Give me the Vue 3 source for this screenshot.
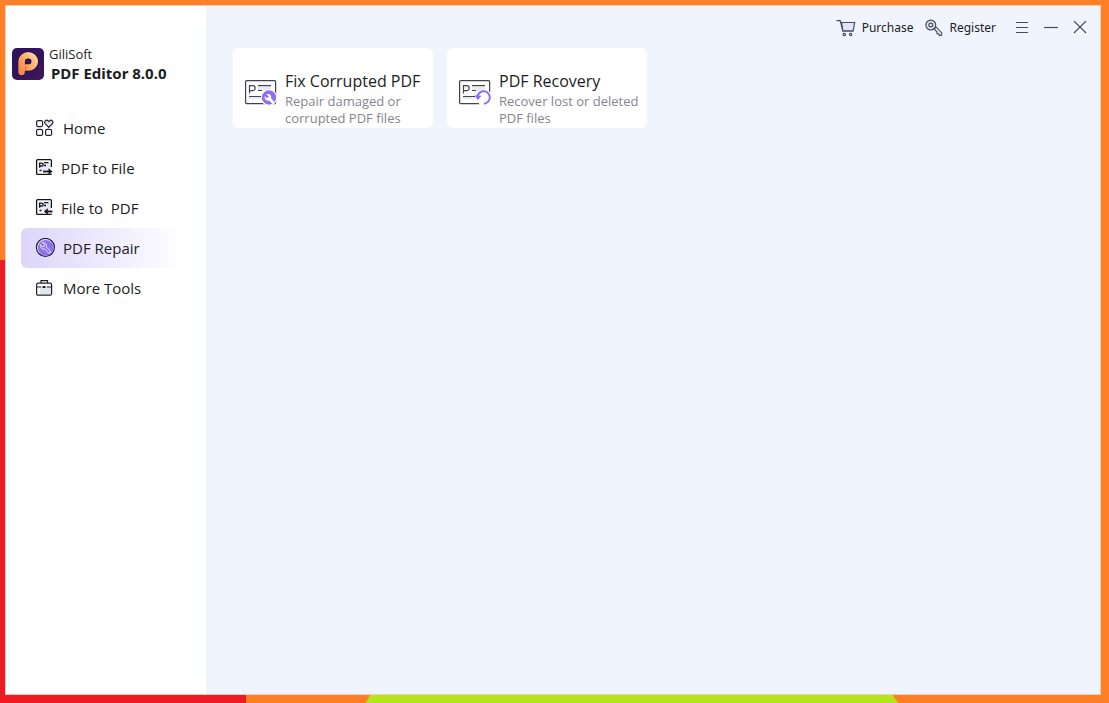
<script setup>
import { ref } from 'vue'

const active = ref('repair')
const items = [
  { id: 'home', label: 'Home' },
  { id: 'toFile', label: 'PDF to File', near: true },
  { id: 'toPdf', label: 'File to  PDF', near: true },
  { id: 'repair', label: 'PDF Repair' },
  { id: 'tools', label: 'More Tools' }
]
const cards = [
  { id: 'fix', title: 'Fix Corrupted PDF', text: 'Repair damaged or corrupted PDF files' },
  { id: 'recovery', title: 'PDF Recovery', text: 'Recover lost or deleted PDF files' }
]
</script>

<template>
  <div class="desktop">
    <div class="window">
      <aside class="sidebar">
        <div class="brand">
          <svg class="logo" viewBox="0 0 32 32" aria-hidden="true">
            <defs>
              <linearGradient id="logoBack" x1="0" y1="0" x2="1" y2="1">
                <stop offset="0" stop-color="#2a1462" />
                <stop offset="1" stop-color="#3f1457" />
              </linearGradient>
              <linearGradient id="logoFront" x1="1" y1="0" x2="0" y2="1">
                <stop offset="0" stop-color="#ffd49a" />
                <stop offset="0.6" stop-color="#fba45f" />
                <stop offset="1" stop-color="#f58a4d" />
              </linearGradient>
            </defs>
            <rect width="32" height="32" rx="5" fill="url(#logoBack)" />
            <path d="M9.6 24V13.4a6.6 6.1 0 1 1 6.6 6.1h-2.2" fill="none" stroke="#1b0b42" stroke-width="8" stroke-linecap="round" />
            <path d="M9.6 24V13.4a6.6 6.1 0 1 1 6.6 6.1h-2.2" fill="none" stroke="url(#logoFront)" stroke-width="6.6" stroke-linecap="round" />
            <path d="M13 22.4c1-1.4.8-2.8.7-4.2" fill="none" stroke="#d96a3f" stroke-width="1" />
          </svg>
          <div class="brand-text">
            <span class="company">GiliSoft</span>
            <strong class="product">PDF Editor 8.0.0</strong>
          </div>
        </div>
        <nav class="nav">
          <button
            v-for="item in items"
            :key="item.id"
            type="button"
            class="nav-item"
            :class="{ active: active === item.id, near: item.near }"
            @click="active = item.id"
          >
            <svg v-if="item.id === 'home'" class="nav-icon" viewBox="0 0 20 20" fill="none" stroke="#20212b" stroke-width="1.2">
              <rect x="1.6" y="2.6" width="6" height="6" rx="1.5" />
              <rect x="1.6" y="11.4" width="6" height="6" rx="1.5" />
              <rect x="10.6" y="11.4" width="6" height="6" rx="1.5" />
              <path d="M13.8 9.3L10.3 5.8a2 2 0 0 1 2.800-2.900l.7.7.7-.7a2 2 0 0 1 2.800 2.900z" fill="#e1e5ef" stroke-linejoin="round" />
            </svg>
            <svg v-else-if="item.id === 'toFile'" class="nav-icon" viewBox="0 0 20 20" fill="none" stroke="#15161c" stroke-width="1.3">
              <path d="M4 5h12v8H5z" fill="#e6e9f3" stroke="none" />
              <path d="M16.4 9V2.600a1 1 0 0 0-1-1H2.600a1 1 0 0 0-1 1v12.800a1 1 0 0 0 1 1h12.800a1 1 0 0 0 1-1" />
              <path d="M4.600 9.800V5.100h2.200a1.400 1.400 0 0 1 0 2.900H4.600M9 4.600h4.500M9 7.500h2M4.500 12.500h2" />
              <path d="M8 13.500h7" stroke-width="1.800" />
              <path d="M13.500 10.300l4 3.200-4 3.200z" fill="#15161c" stroke="none" />
            </svg>
            <svg v-else-if="item.id === 'toPdf'" class="nav-icon" viewBox="0 0 20 20" fill="none" stroke="#15161c" stroke-width="1.3">
              <path d="M4 5h12v8H5z" fill="#e6e9f3" stroke="none" />
              <path d="M16.4 10V2.600a1 1 0 0 0-1-1H2.600a1 1 0 0 0-1 1v12.800a1 1 0 0 0 1 1h12.800a1 1 0 0 0 1-1" />
              <path d="M4.600 9.800V5.100h2.200a1.400 1.400 0 0 1 0 2.900H4.600M9 4.600h4.500M9 7.500h2M4.500 12.500h2" />
              <path d="M11 13.500h6.500" stroke-width="1.800" />
              <path d="M12.800 10.300l-4 3.200 4 3.200z" fill="#15161c" stroke="none" />
            </svg>
            <svg v-else-if="item.id === 'repair'" class="nav-icon" viewBox="0 0 20 20">
              <circle cx="10.4" cy="9.4" r="9" fill="#f3efff" stroke="#211c40" stroke-width="1.2" />
              <circle cx="10.7" cy="9.8" r="7.8" fill="#8e6fee" />
              <path d="M7.300 4.700l2.200 2-.3 1.700-1.700.4-2-2.200c-.7 3 1.400 5 4.100 4.300l3.600 3.800c1.500 1.200 3-.4 2-1.900l-3.800-3.600c.8-2.700-1.200-5-4.100-4.500z" fill="#8e6fee" stroke="#efe9ff" stroke-width="1" />
            </svg>
            <svg v-else class="nav-icon" viewBox="0 0 20 20" fill="none" stroke="#20212b" stroke-width="1.2">
              <path d="M5 9h11v7H5z" fill="#e1e5ef" stroke="none" />
              <rect x="1.6" y="5.2" width="15" height="12" rx="1.5" />
              <path d="M6 5V2.700h6.500V5M1.700 9h4.500M12 9h4.400" />
              <path d="M7.5 9h3" stroke-width="2" />
            </svg>
            <span class="nav-label">{{ item.label }}</span>
          </button>
        </nav>
      </aside>

      <main class="main">
        <header class="titlebar">
          <button type="button" class="link">
            <svg class="cart" viewBox="0 0 20 18" fill="none" stroke="#4a4b5c" stroke-width="1.2" aria-hidden="true">
              <path d="M5.6 3.5h13l-1.400 8.500H6.800z" fill="#dfe5f2" />
              <path d="M.5 1.600h3.700l2.600 10.400h10.400" />
              <circle cx="8.3" cy="15.500" r="1.2" /><circle cx="14.6" cy="15.500" r="1.2" />
            </svg>
            Purchase
          </button>
          <button type="button" class="link register">
            <svg class="key" viewBox="0 0 18 18" fill="none" stroke="#4a4b5c" stroke-width="1.2" aria-hidden="true">
              <circle cx="5.8" cy="6" r="4.9" fill="#dfe5f2" />
              <circle cx="5.8" cy="6" r="1.9" />
              <path d="M9 9.800l2.200-1.600 5.500 5.700-.2 2.300-2.200.3-.5-1.700-1.700-.2-.2-1.800z" fill="#eef1fb" />
            </svg>
            Register
          </button>
          <button type="button" class="control menu" aria-label="Menu">
            <svg viewBox="0 0 14 14" stroke="#4a4b5c" stroke-width="1.2"><path d="M1 1.500h12M1 6.500h12M1 11.500h12" /></svg>
          </button>
          <button type="button" class="control" aria-label="Minimize">
            <svg viewBox="0 0 14 14" stroke="#4a4b5c" stroke-width="1.2"><path d="M0 6.500h14" /></svg>
          </button>
          <button type="button" class="control" aria-label="Close">
            <svg viewBox="0 0 14 14" stroke="#4a4b5c" stroke-width="1.2"><path d="M1 0l12 12M13 0L1 12" /></svg>
          </button>
        </header>

        <section class="cards">
          <button v-for="card in cards" :key="card.id" type="button" class="card">
            <svg class="card-icon" viewBox="0 0 32 28" fill="none" stroke="#42434f" stroke-width="1.2" aria-hidden="true">
              <path d="M13 9h13v4H13zM4 19h12v2H4z" fill="#e8eaf6" stroke="none" />
              <rect x=".6" y="2.6" width="30" height="23" rx="1" />
              <path d="M4.500 15.500V7.600h3.200a2.500 2.500 0 0 1 0 5H4.500M13 7.600h13M13 12.500h4M4 18.500h12" />
              <template v-if="card.id === 'fix'">
                <circle cx="24" cy="19.5" r="8.3" fill="#fff" stroke="none" />
                <circle cx="24" cy="19.5" r="7.2" fill="#8f70ee" stroke="none" />
                <path d="M21.500 16.200l2.200 2.100-.5 1.300-1.500.4-2-1.900c-.6 3.400 1.700 5.300 4.500 4.400l3.300 3.500 2-2-3.400-3.500c.8-2.700-1.500-5.100-4.600-4.300z" fill="#fff" stroke="none" />
              </template>
              <template v-else>
                <path d="M15 14.500l9-3 8.500 3V28H21z" fill="#fff" stroke="none" />
                <path d="M18.500 18.500a6.200 6.200 0 1 1 6.300 7.200" stroke="#8f70ee" stroke-width="2" />
                <path d="M15.500 17.200l7 .5-3.700 4.500z" fill="#8f70ee" stroke="none" />
              </template>
            </svg>
            <span class="card-text">
              <span class="card-title">{{ card.title }}</span>
              <span class="card-desc">{{ card.text }}</span>
            </span>
          </button>
        </section>
      </main>
    </div>
    <div class="floor" aria-hidden="true"><div class="grass"></div></div>
  </div>
</template>

<style>
body {
  margin: 0;
}
</style>

<style scoped>
.desktop {
  min-height: 100vh;
  box-sizing: border-box;
  display: flex;
  flex-direction: column;
  padding: 5px 0 0 5px;
  background: linear-gradient(#ff7f27 0 37%, #ed1c24 37%) left / 5px 100% no-repeat, #ff7f27;
  font-family: "Open Sans", "Noto Sans", sans-serif;
  color: #1c1d22;
}
.window {
  flex: 1;
  display: flex;
  margin-right: 8px;
  box-sizing: border-box;
  border: 1px solid #f3cdb8;
  background: #f0f4fd;
}
.floor {
  height: 8px;
  margin-left: -5px;
  background: linear-gradient(90deg, #ed1c24 22.2%, #ff7f27 22.2%);
}
.grass {
  height: 100%;
  width: 48%;
  margin-left: 33%;
  background: #b5e61d;
  clip-path: polygon(4px 0, calc(100% - 6px) 0, 100% 100%, 0 100%);
}
button {
  border: 0;
  padding: 0;
  margin: 0;
  background: none;
  font: inherit;
  color: inherit;
  text-align: left;
}
.sidebar {
  width: 200px;
  flex: none;
  background: #fff;
}
.brand {
  display: flex;
  align-items: center;
  gap: 5px;
  padding: 39px 0 0 6px;
}
.logo {
  width: 32px;
  height: 32px;
}
.brand-text {
  display: flex;
  flex-direction: column;
}
.company {
  font-size: 13px;
  line-height: 18px;
}
.product {
  padding-left: 2px;
  font-family: "Noto Sans", sans-serif;
  font-size: 15px;
  line-height: 20px;
}
.nav {
  display: flex;
  flex-direction: column;
  padding: 25px 22px 0 15px;
}
.nav-item {
  display: flex;
  align-items: center;
  gap: 8px;
  height: 40px;
  padding-left: 14px;
  border-radius: 6px;
  font-size: 15px;
}
.nav-item.near {
  gap: 6px;
}
.nav-item.active {
  background: linear-gradient(90deg, #dcd5f9, #fff);
}
.nav-icon {
  width: 20px;
  height: 20px;
}
.nav-label {
  white-space: pre;
}
.main {
  flex: 1;
  min-width: 0;
}
.titlebar {
  display: flex;
  align-items: center;
  justify-content: flex-end;
  height: 42px;
  box-sizing: border-box;
  padding: 2px 13px 0 0;
}
.link {
  display: flex;
  align-items: center;
  gap: 6px;
  font-family: "Noto Sans", sans-serif;
  font-size: 12px;
  line-height: 20px;
}
.register {
  margin: 0 19px 0 12px;
}
.cart {
  width: 20px;
  height: 18px;
}
.key {
  width: 18px;
  height: 18px;
}
.control {
  display: flex;
  margin-left: 15px;
}
.control.menu {
  margin-left: 0;
}
.control svg {
  width: 14px;
  height: 14px;
}
.cards {
  display: flex;
  flex-wrap: wrap;
  gap: 14px;
  padding: 0 27px;
}
.card {
  display: flex;
  align-items: flex-start;
  gap: 8px;
  width: 200px;
  min-height: 80px;
  box-sizing: border-box;
  padding-left: 12px;
  border-radius: 6px;
  background: #fff;
}
.card-icon {
  flex: none;
  width: 32px;
  height: 28px;
  margin-top: 30px;
}
.card-text {
  display: flex;
  flex-direction: column;
  margin-top: 22px;
}
.card-title {
  font-size: 16px;
  line-height: 23px;
  white-space: nowrap;
}
.card-desc {
  font-size: 13px;
  line-height: 17px;
  color: #85858f;
}
</style>
